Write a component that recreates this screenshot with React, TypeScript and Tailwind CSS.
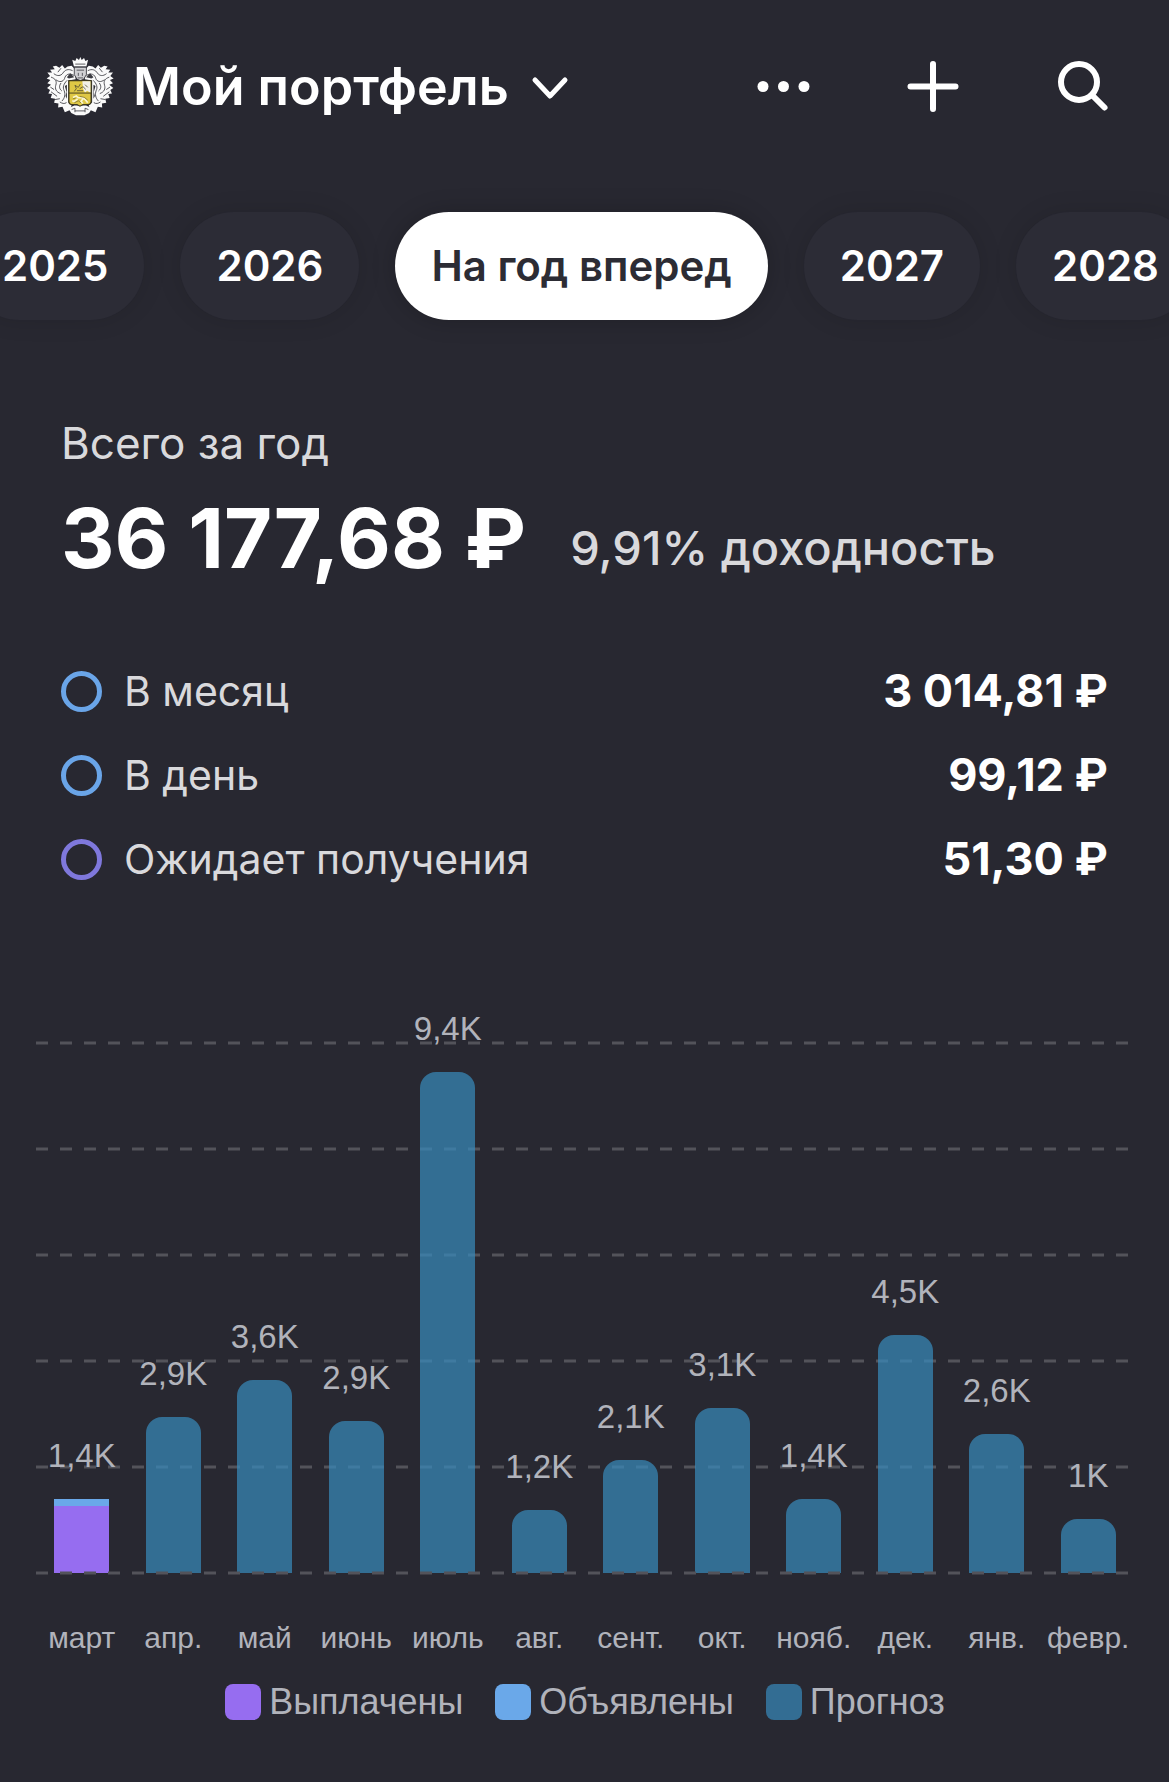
const tabs = ['2025', '2026', 'На год вперед', '2027', '2028'];

const totals = [
  { label: 'В месяц', value: '3 014,81 ₽', ring: 'border-[#6aa5e8]' },
  { label: 'В день', value: '99,12 ₽', ring: 'border-[#6aa5e8]' },
  { label: 'Ожидает получения', value: '51,30 ₽', ring: 'border-[#7f78dc]' },
];

const months = [
  { name: 'март', label: '1,4K', height: 74, paid: 67 },
  { name: 'апр.', label: '2,9K', height: 156 },
  { name: 'май', label: '3,6K', height: 193 },
  { name: 'июнь', label: '2,9K', height: 152 },
  { name: 'июль', label: '9,4K', height: 501 },
  { name: 'авг.', label: '1,2K', height: 63 },
  { name: 'сент.', label: '2,1K', height: 113 },
  { name: 'окт.', label: '3,1K', height: 165 },
  { name: 'нояб.', label: '1,4K', height: 74 },
  { name: 'дек.', label: '4,5K', height: 238 },
  { name: 'янв.', label: '2,6K', height: 139 },
  { name: 'февр.', label: '1K', height: 54 },
];

const legend = [
  { name: 'Выплачены', color: 'bg-[#966df0]' },
  { name: 'Объявлены', color: 'bg-[#6aa8e9]' },
  { name: 'Прогноз', color: 'bg-[#336d93]' },
];

function MantlingHalf() {
  return (
    <g strokeLinejoin="round" strokeLinecap="round">
      <path
        d="M136 88 L126 78 L114 80 L106 86 L98 76 L90 84 L80 78 L70 80 L76 88 L62 90 L68 98 L54 98 L62 108 L52 116 L63 120 L54 130 L65 134 L53 144 L62 150 L57 160 L68 162 L64 174 L77 176 L74 188 L87 190 L86 202 L99 200 L106 216 L120 210 L126 196 L116 186 L116 122 L138 118 Z"
        fill="#fafafa"
      />
      <g fill="none" stroke="#2f2f36" strokeWidth="2.4">
        <path d="M128 92 C116 86 106 90 100 100 C94 108 84 110 74 102" />
        <path d="M132 106 C118 98 108 104 105 116 C101 126 90 128 80 120" />
        <path d="M94 86 L86 96 M112 122 C102 132 99 142 104 152 C108 162 106 174 98 182" />
        <path d="M66 112 C78 116 83 124 79 136 C76 146 80 156 92 160" />
        <path d="M94 130 C88 138 89 146 96 152 M64 142 L73 148 M66 156 L82 168" />
        <path d="M110 188 C104 192 98 190 92 186 M78 178 L90 176" />
      </g>
      <path d="M106 138 L112 134 V176 L108 168 L111 156 Z" fill="#2f2f36" />
      <path d="M122 100 L134 112 L118 116 L112 112 Z" fill="#3a3a40" />
    </g>
  );
}

function Crest() {
  return (
    <svg viewBox="50 52 202 178" className="h-[60px] w-[68px] shrink-0" aria-hidden="true">
      <MantlingHalf />
      <g transform="translate(303 0) scale(-1 1)">
        <MantlingHalf />
      </g>
      <path d="M116 204 L134 196 H169 L187 204 L178 218 L164 225 H139 L125 218 Z" fill="#fafafa" />
      <path d="M126 208 L136 204 V216 M176 208 L166 204 V216 M136 212 H166" fill="none" stroke="#3a3a40" strokeWidth="2.4" />
      <path d="M133 80 L128 60 L137 64 L141 55 L148 61 L152 52 L156 61 L163 55 L167 64 L175 60 L170 80 Z" fill="#fafafa" />
      <path d="M137 73 H167" fill="none" stroke="#3a3a40" strokeWidth="2.4" />
      <path d="M134 82 H170 V104 L162 118 L152 122 L142 118 L134 104 Z" fill="#d0d0d3" stroke="#2f2f36" strokeWidth="2.5" />
      <path d="M141 91 H163 M146 99 V108 M158 99 V108 M144 114 H160" fill="none" stroke="#4c4c52" strokeWidth="2.6" />
      <path d="M118 122 H184 V184 Q184 192 176 193 H160 L151 198 L142 193 H126 Q118 192 118 184 Z" fill="#dfc845" stroke="#3f3a20" strokeWidth="3.5" />
      <path d="M158 124 H182 V158 L172 152 L166 158 L160 146 Z" fill="#f2f1e6" />
      <path d="M118 159 H184" stroke="#4d4520" strokeWidth="3" />
      <path d="M134 154 L140 146 L136 136 L146 142 L152 132 M142 152 H160 M150 146 L160 140 L168 148 M166 134 L174 142" fill="none" stroke="#565033" strokeWidth="2.5" />
      <path d="M130 172 L140 168 L146 173 H160 L168 180 L174 188 M144 176 L134 184 L128 182 M160 176 L154 184 L160 190" fill="none" stroke="#fbf6cf" strokeWidth="5" />
      <path d="M130 176 L138 174 M134 188 L146 182 L154 188 M150 169 L164 172 L174 180" fill="none" stroke="#6a5f25" strokeWidth="2" />
    </svg>
  );
}

function GridLine({ className }: { className: string }) {
  return (
    <svg className={`block h-1 w-full ${className}`} aria-hidden="true">
      <line x1="0" y1="2" x2="100%" y2="2" strokeWidth="3" strokeDasharray="12 12" className="stroke-[#53535a]" />
    </svg>
  );
}

export default function App() {
  return (
    <main className="min-h-screen overflow-hidden bg-[#282831] font-['Inter',sans-serif] text-white">
      <header className="flex h-[174px] items-center justify-between pr-14 pl-[46px]">
        <button type="button" className="flex items-center gap-[19px]">
          <Crest />
          <h1 className="text-[52px] leading-[64px] font-semibold">Мой портфель</h1>
          <svg viewBox="0 0 44 44" className="size-11" fill="none" stroke="currentColor" strokeWidth="5" strokeLinecap="round" strokeLinejoin="round" aria-hidden="true">
            <path d="M7 15 L22 31 L37 15" />
          </svg>
        </button>
        <nav className="flex gap-[90px]">
          <button type="button" aria-label="Ещё">
            <svg viewBox="0 0 60 60" className="size-[60px]" fill="currentColor">
              <circle cx="10" cy="29.5" r="5.5" />
              <circle cx="30.5" cy="29.5" r="5.5" />
              <circle cx="51" cy="29.5" r="5.5" />
            </svg>
          </button>
          <button type="button" aria-label="Добавить">
            <svg viewBox="0 0 60 60" className="size-[60px]" stroke="currentColor" strokeWidth="6" strokeLinecap="round">
              <path d="M30 7 V52 M7.5 29.5 H52.5" />
            </svg>
          </button>
          <button type="button" aria-label="Поиск">
            <svg viewBox="0 0 60 60" className="size-[60px]" fill="none" stroke="currentColor" strokeWidth="6" strokeLinecap="round">
              <circle cx="26" cy="25" r="18" />
              <path d="M39 38 L51.5 50.5" />
            </svg>
          </button>
        </nav>
      </header>

      <div className="mt-[38px] -ml-[34px] flex gap-9">
        {tabs.map((tab) => (
          <button
            key={tab}
            type="button"
            className={
              tab === 'На год вперед'
                ? 'h-[108px] shrink-0 rounded-full bg-white px-9 text-[42px] leading-[52px] font-semibold text-[#2c2c34] shadow-[0_0_24px_rgba(0,0,0,0.2)]'
                : 'h-[108px] shrink-0 rounded-full bg-[#2c2c36] px-9 text-[42px] leading-[52px] font-semibold shadow-[0_0_24px_rgba(0,0,0,0.12)]'
            }
          >
            {tab}
          </button>
        ))}
      </div>

      <section className="mt-[97px] pr-[61px] pl-[61px]">
        <p className="text-[44px] leading-[52px] text-[#d9d9dc]">Всего за год</p>
        <div className="mt-[21px] flex items-end gap-11">
          <strong className="text-[83px] leading-[96px] font-bold">36 177,68 ₽</strong>
          <span className="mb-2.5 text-[47px] leading-[56px] font-medium text-[#d9d9dc]">9,91% доходность</span>
        </div>
        <dl className="mt-[63px]">
          {totals.map((row) => (
            <div key={row.label} className="flex h-[84px] items-center justify-between">
              <dt className="flex items-center gap-[22px] text-[41px] leading-[52px] text-[#d9d9dc]">
                <span className={`size-[41px] rounded-full border-[5px] ${row.ring}`} />
                {row.label}
              </dt>
              <dd className="text-[45px] leading-[52px] font-bold">{row.value}</dd>
            </div>
          ))}
        </dl>
      </section>

      <section className="mt-[140px] pr-[35px] pb-10 pl-9 font-['Liberation_Sans',sans-serif] text-[#b1b3bb]">
        <div className="relative">
          <div className="absolute inset-0 flex flex-col justify-between">
            <GridLine className="" />
            <GridLine className="" />
            <GridLine className="" />
            <GridLine className="" />
            <GridLine className="" />
            <GridLine className="relative z-10" />
          </div>
          <div className="relative grid h-[534px] grid-cols-12 grid-rows-[minmax(0,1fr)] items-end pb-0.5">
            {months.map((m) => (
              <div key={m.name} className="flex flex-col items-center">
                <span className="mb-[23px] text-[33px] leading-10">{m.label}</span>
                {m.paid ? (
                  <div className="flex w-[55px] flex-col justify-end bg-[#6aa8e9]" style={{ height: m.height }}>
                    <div className="bg-[#966df0]" style={{ height: m.paid }} />
                  </div>
                ) : (
                  <div className="w-[55px] rounded-t-2xl bg-[#388bbd]/70" style={{ height: m.height }} />
                )}
              </div>
            ))}
          </div>
        </div>
        <div className="mt-[47px] grid grid-cols-12 text-center text-[30px] leading-8">
          {months.map((m) => (
            <span key={m.name} className="flex justify-center whitespace-nowrap">
              {m.name}
            </span>
          ))}
        </div>
        <ul className="mt-7 flex justify-center gap-8 text-[36px] leading-10">
          {legend.map((item) => (
            <li key={item.name} className="flex items-center gap-2">
              <span className={`size-9 rounded-lg ${item.color}`} />
              {item.name}
            </li>
          ))}
        </ul>
      </section>
    </main>
  );
}
